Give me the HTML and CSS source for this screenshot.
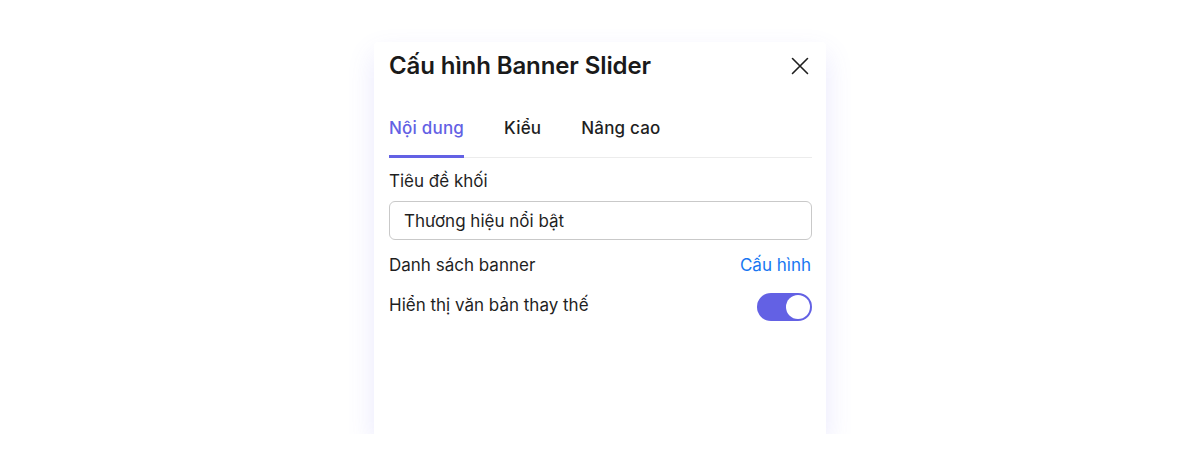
FILE: index.html
```html
<!DOCTYPE html>
<html lang="vi">
<head>
  <meta charset="UTF-8">
  <meta name="viewport" content="width=device-width, initial-scale=1.0">
  <title>Cấu hình Banner Slider</title>
  <link rel="stylesheet" href="styles.css">
</head>
<body>
  <div class="panel">
    <div class="panel-header">
      <h1>Cấu hình Banner Slider</h1>
      <button class="close" aria-label="Đóng">
        <svg width="18" height="18" viewBox="0 0 18 18">
          <path d="M1.5 1.5 L16.5 16.5 M16.5 1.5 L1.5 16.5" stroke="#1f1f1f" stroke-width="1.6" stroke-linecap="round" fill="none"/>
        </svg>
      </button>
    </div>

    <div class="tabs">
      <div class="tab active">Nội dung</div>
      <div class="tab">Kiểu</div>
      <div class="tab">Nâng cao</div>
    </div>

    <label class="field-label" for="blockTitle">Tiêu đề khối</label>
    <input type="text" id="blockTitle" value="Thương hiệu nổi bật">

    <div class="row row-link">
      <span>Danh sách banner</span>
      <a href="#" class="link">Cấu hình</a>
    </div>

    <div class="row row-toggle">
      <span>Hiển thị văn bản thay thế</span>
      <span class="toggle on"><span class="knob"></span></span>
    </div>
  </div>
</body>
</html>
```

FILE: styles.css
```css
body {
  margin: 0;
  background: #fff;
  font-family: Inter, "Noto Sans", sans-serif;
  color: #1f1f1f;
}
.panel {
  width: 452px;
  height: 392px;
  box-sizing: border-box;
  margin: 42px auto 0;
  padding: 0 14px 0 15px;
  background: #fff;
  border-radius: 4px 4px 0 0;
  box-shadow: 0 12px 28px rgba(98, 90, 240, 0.14);
}
.panel-header {
  display: flex;
  align-items: center;
  justify-content: space-between;
  padding-top: 8px;
  height: 32px;
}
h1 {
  margin: 0;
  font-size: 24px;
  line-height: 32px;
  font-weight: 600;
  letter-spacing: -0.1px;
  color: #1a1a1a;
}
.close {
  border: none;
  background: none;
  padding: 0;
  margin-right: 3px;
  width: 18px;
  height: 18px;
  cursor: pointer;
}
.tabs {
  display: flex;
  gap: 40px;
  margin-top: 34px;
  box-shadow: inset 0 -1px 0 #ececec;
}
.tab {
  font-size: 17px;
  line-height: 24px;
  font-weight: 500;
  letter-spacing: 0.2px;
  padding-bottom: 15px;
  border-bottom: 3px solid transparent;
  color: #1f1f1f;
}
.tab.active {
  color: #6361e4;
  border-bottom-color: #6361e4;
}
.field-label {
  display: block;
  margin-top: 11px;
  font-size: 17px;
  line-height: 24px;
}
input {
  display: block;
  width: 100%;
  height: 39px;
  box-sizing: border-box;
  margin-top: 8px;
  padding: 0 14px;
  border: 1px solid #c9c9c9;
  border-radius: 6px;
  font-family: inherit;
  font-size: 17px;
  color: #1f1f1f;
  outline: none;
}
.row {
  display: flex;
  align-items: center;
  justify-content: space-between;
  font-size: 17px;
  line-height: 24px;
}
.row-link {
  margin-top: 13px;
}
.link {
  color: #1877f2;
  text-decoration: none;
  margin-right: 1px;
}
.row-toggle {
  margin-top: 16px;
  height: 28px;
}
.row-toggle > span:first-child {
  margin-top: -4px;
}
.toggle {
  width: 55px;
  height: 28px;
  border-radius: 14px;
  background: #6361e4;
  display: flex;
  align-items: center;
  justify-content: flex-end;
  padding: 0 2px;
  box-sizing: border-box;
}
.knob {
  width: 24px;
  height: 24px;
  border-radius: 50%;
  background: #fff;
}
```
